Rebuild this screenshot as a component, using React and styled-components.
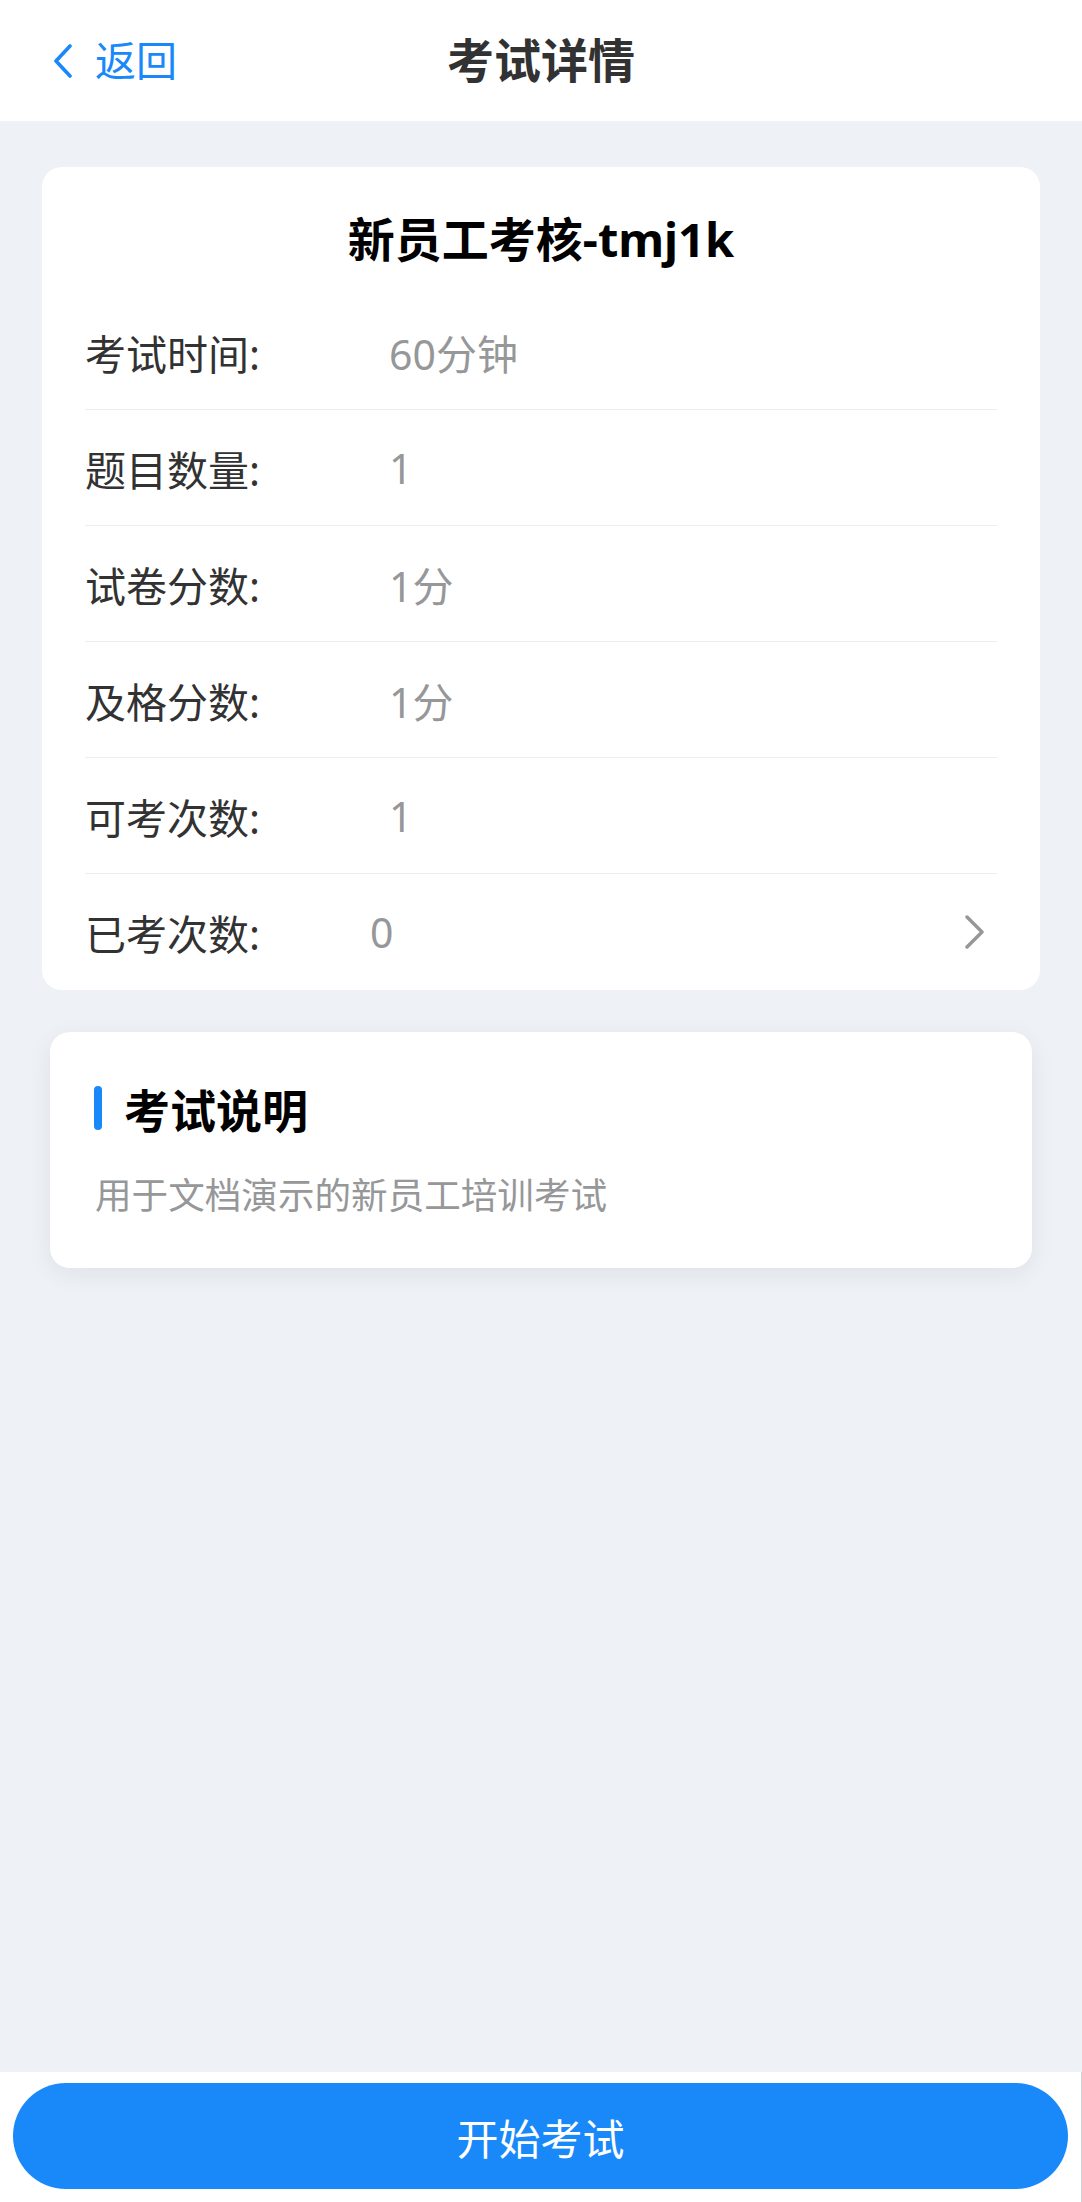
import React from "react";
import styled, { createGlobalStyle } from "styled-components";

const Global = createGlobalStyle`
  html, body { margin: 0; padding: 0; }
  body {
    background: #eef1f5;
    font-family: "Noto Sans", "Noto Sans CJK SC", sans-serif;
  }
  * { box-sizing: border-box; }
`;

const Page = styled.div`
  min-height: 100vh;
  display: flex;
  flex-direction: column;
  background: #eef1f5;
`;

const NavBar = styled.header`
  height: 121px;
  background: #ffffff;
  display: grid;
  grid-template-columns: 1fr auto 1fr;
  align-items: center;
`;

const BackButton = styled.div`
  display: flex;
  align-items: center;
  gap: 22px;
  padding-left: 53px;
  color: #1989fa;
  font-size: 41px;
  line-height: 1;
`;

const NavTitle = styled.h1`
  margin: 0;
  font-size: 47px;
  font-weight: 700;
  color: #323233;
  line-height: 1;
`;

const Main = styled.main`
  flex: 1;
  padding: 46px 42px 40px;
  display: flex;
  flex-direction: column;
  gap: 42px;
`;

const InfoCard = styled.section`
  background: #ffffff;
  border-radius: 20px;
  padding: 0 43px;
`;

const CardTitle = styled.h2`
  margin: 0;
  padding-top: 42px;
  margin-bottom: 25px;
  text-align: center;
  font-size: 47px;
  line-height: 60px;
  font-weight: 700;
  color: #000000;
`;

const Row = styled.div`
  height: 116px;
  display: flex;
  align-items: center;
  border-bottom: ${(p) => (p.$last ? "none" : "1px solid #ebedf0")};
  font-size: 41px;
`;

const Label = styled.span`
  width: ${(p) => p.$w}px;
  flex-shrink: 0;
  color: #323233;
`;

const Value = styled.span`
  flex: 1;
  color: #969799;
`;

const Arrow = styled.span`
  display: flex;
  align-items: center;
  margin-right: 11px;
`;

const DescCard = styled.section`
  margin: 0 8px;
  background: #ffffff;
  border-radius: 20px;
  box-shadow: 0 6px 24px rgba(30, 40, 60, 0.07);
  padding: 46px 44px 48px;
`;

const DescHeading = styled.div`
  display: flex;
  align-items: center;
  gap: 22px;
  height: 60px;
  font-size: 46px;
  font-weight: 700;
  color: #000000;
`;

const Bar = styled.span`
  width: 8px;
  height: 44px;
  border-radius: 4px;
  background: #1989fa;
`;

const DescText = styled.p`
  margin: 32px 0 0 1px;
  font-size: 36.6px;
  line-height: 50px;
  color: #969799;
`;

const Footer = styled.footer`
  height: 130px;
  background: #ffffff;
  border-right: 1px solid #cfd2d6;
  padding: 11px 13px 0 13px;
`;

const StartButton = styled.button`
  width: 100%;
  height: 106px;
  border: none;
  border-radius: 53px;
  background: #1989fa;
  color: #ffffff;
  font-family: "Noto Sans", "Noto Sans CJK SC", sans-serif;
  font-size: 42px;
  display: flex;
  align-items: center;
  justify-content: center;
`;

const rows = [
  ["考试时间:", "60分钟"],
  ["题目数量:", "1"],
  ["试卷分数:", "1分"],
  ["及格分数:", "1分"],
  ["可考次数:", "1"],
];

export default function App() {
  return (
    <Page>
      <Global />
      <NavBar>
        <BackButton>
          <svg width="20" height="34" viewBox="0 0 20 34" fill="none">
            <polyline
              points="17,2 3,17 17,32"
              stroke="#1989fa"
              strokeWidth="3.6"
              strokeLinecap="round"
              strokeLinejoin="round"
            />
          </svg>
          <span>返回</span>
        </BackButton>
        <NavTitle>考试详情</NavTitle>
        <div />
      </NavBar>
      <Main>
        <InfoCard>
          <CardTitle>新员工考核-tmj1k</CardTitle>
          {rows.map(([l, v]) => (
            <Row key={l}>
              <Label $w={304}>{l}</Label>
              <Value>{v}</Value>
            </Row>
          ))}
          <Row $last>
            <Label $w={285}>已考次数:</Label>
            <Value>0</Value>
            <Arrow>
              <svg width="22" height="34" viewBox="0 0 22 34" fill="none">
                <polyline
                  points="3,2 18,17 3,32"
                  stroke="#969799"
                  strokeWidth="3.4"
                  strokeLinecap="round"
                  strokeLinejoin="round"
                />
              </svg>
            </Arrow>
          </Row>
        </InfoCard>
        <DescCard>
          <DescHeading>
            <Bar />
            <span>考试说明</span>
          </DescHeading>
          <DescText>用于文档演示的新员工培训考试</DescText>
        </DescCard>
      </Main>
      <Footer>
        <StartButton>开始考试</StartButton>
      </Footer>
    </Page>
  );
}
